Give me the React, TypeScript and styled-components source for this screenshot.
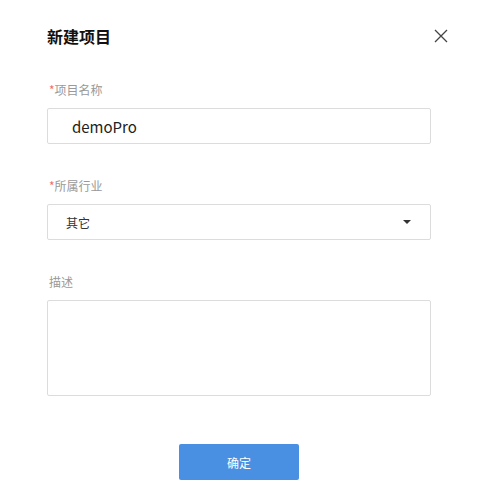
import React, { useState } from "react";
import { styled, createGlobalStyle } from "styled-components";

const Global = createGlobalStyle`
  body {
    margin: 0;
    background: #fff;
    font-family: "Noto Sans CJK SC", "Noto Sans", sans-serif;
  }
`;

const Dialog = styled.div`
  width: 479px;
  height: 504px;
  box-sizing: border-box;
  padding: 0 48px 0 47px;
  display: flex;
  flex-direction: column;
  background: #fff;
`;

const Header = styled.div`
  height: 24px;
  margin-top: 24px;
  display: flex;
  align-items: center;
  justify-content: space-between;
`;

const Title = styled.h2`
  margin: 0;
  font-size: 16px;
  font-weight: 700;
  color: #111;
  line-height: 24px;
`;

const CloseBtn = styled.button`
  border: 0;
  background: none;
  padding: 0;
  margin-right: -17px;
  width: 14px;
  height: 14px;
  display: flex;
  cursor: pointer;
`;

const Field = styled.div`
  display: flex;
  flex-direction: column;
  margin-top: 33px;
`;

const Label = styled.label`
  font-size: 12px;
  line-height: 18px;
  color: #999;
  margin-bottom: 9px;
  padding-left: 2px;
`;

const Star = styled.span`
  color: #f56c6c;
`;

const Input = styled.input`
  height: 36px;
  box-sizing: border-box;
  border: 1px solid #dcdcdc;
  border-radius: 2px;
  padding: 0 24px;
  font-family: inherit;
  font-size: 15px;
  color: #222;
  outline: none;
`;

const Select = styled.div`
  height: 36px;
  box-sizing: border-box;
  border: 1px solid #dcdcdc;
  border-radius: 2px;
  padding: 0 19px 0 18px;
  display: flex;
  align-items: center;
  justify-content: space-between;
  font-size: 12px;
  color: #333;
  cursor: pointer;
`;

const Caret = styled.span`
  width: 0;
  height: 0;
  border-left: 4px solid transparent;
  border-right: 4px solid transparent;
  border-top: 4px solid #333;
`;

const TextArea = styled.textarea`
  height: 96px;
  box-sizing: border-box;
  border: 1px solid #dcdcdc;
  border-radius: 2px;
  resize: none;
  outline: none;
  font-family: inherit;
  font-size: 12px;
  padding: 8px 12px;
`;

const Footer = styled.div`
  display: flex;
  justify-content: center;
  margin-top: 48px;
`;

const Confirm = styled.button`
  width: 120px;
  height: 36px;
  border: 0;
  border-radius: 2px;
  background: #4a90e2;
  color: #fff;
  font-family: inherit;
  font-size: 12px;
  cursor: pointer;
`;

export default function App() {
  const [name, setName] = useState("demoPro");
  const [desc, setDesc] = useState("");

  return (
    <>
      <Global />
      <Dialog>
        <Header>
          <Title>新建项目</Title>
          <CloseBtn aria-label="close">
            <svg width="14" height="14" viewBox="0 0 14 14">
              <path d="M1 1L13 13M13 1L1 13" stroke="#444" strokeWidth="1.3" fill="none" />
            </svg>
          </CloseBtn>
        </Header>

        <Field>
          <Label><Star>*</Star>项目名称</Label>
          <Input value={name} onChange={(e) => setName(e.target.value)} />
        </Field>

        <Field>
          <Label><Star>*</Star>所属行业</Label>
          <Select>
            <span>其它</span>
            <Caret />
          </Select>
        </Field>

        <Field>
          <Label>描述</Label>
          <TextArea value={desc} onChange={(e) => setDesc(e.target.value)} />
        </Field>

        <Footer>
          <Confirm>确定</Confirm>
        </Footer>
      </Dialog>
    </>
  );
}
